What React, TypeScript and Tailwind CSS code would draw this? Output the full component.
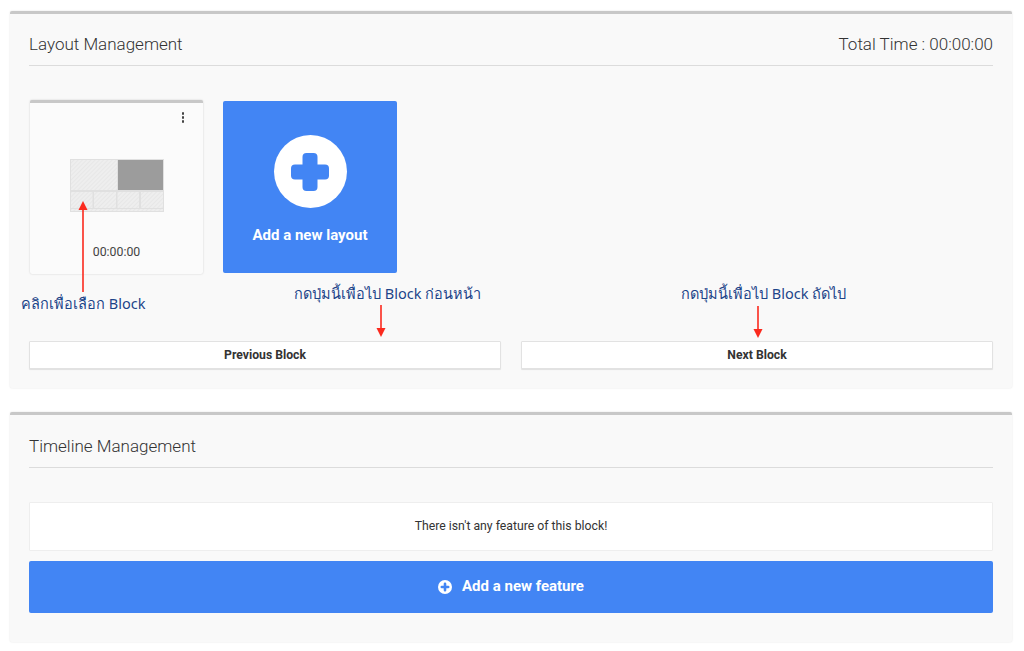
const roboto = "font-['Roboto',sans-serif]"

function Panel({ className, children }: { className: string; children: React.ReactNode }) {
  return (
    <div className={`relative ml-[10px] mr-[12px] rounded-[2px] border-t-[3px] border-[#c8c8c8] bg-[#f9f9f9] px-[19px] shadow-[0_0_2px_rgba(0,0,0,0.12)] ${className}`}>
      {children}
    </div>
  )
}

function LayoutThumb() {
  return (
    <svg width="94" height="53" viewBox="0 0 94 53" className="block">
      <defs>
        <pattern id="hatch" width="3" height="3" patternUnits="userSpaceOnUse" patternTransform="rotate(45)">
          <rect width="3" height="3" fill="#eeeeee" />
          <rect width="1" height="3" fill="#e7e7e7" />
        </pattern>
      </defs>
      <rect width="94" height="53" fill="#e0e0e0" />
      <rect x="1" y="1" width="46" height="30" fill="url(#hatch)" />
      <rect x="48" y="1" width="45" height="30" fill="#9c9c9c" />
      <rect x="1" y="33" width="21.5" height="16" fill="url(#hatch)" />
      <rect x="24" y="33" width="22" height="16" fill="url(#hatch)" />
      <rect x="47.5" y="33" width="21.5" height="16" fill="url(#hatch)" />
      <rect x="71" y="33" width="22" height="16" fill="url(#hatch)" />
      <rect x="1" y="50" width="92" height="2" fill="url(#hatch)" />
    </svg>
  )
}

function Arrow({ className, height, up }: { className: string; height: number; up?: boolean }) {
  return (
    <svg width="10" height={height} viewBox={`0 0 10 ${height}`} className={`absolute ${className}`}>
      {up ? (
        <>
          <path d={`M5 8V${height}`} stroke="#fb2a1e" strokeWidth="1.6" />
          <path d="M5 0L9.5 9H0.5Z" fill="#fb2a1e" />
        </>
      ) : (
        <>
          <path d={`M5 0V${height - 8}`} stroke="#fb2a1e" strokeWidth="1.6" />
          <path d={`M5 ${height}L0.5 ${height - 9}H9.5Z`} fill="#fb2a1e" />
        </>
      )}
    </svg>
  )
}

function Note({ className, children }: { className: string; children: React.ReactNode }) {
  return (
    <span className={`absolute whitespace-nowrap font-['Noto_Sans','Roboto',sans-serif] text-[14.5px] leading-[20px] text-[#1d4489] ${className}`}>
      {children}
    </span>
  )
}

export default function App() {
  return (
    <div className={`relative h-[651px] overflow-hidden bg-white pt-[11px] ${roboto}`}>
      <Panel className="h-[377px]">
        <div className="flex h-[52px] items-center justify-between border-b border-[#dcdcdc] pt-[10px] text-[17px] font-light text-[#333]">
          <span>Layout Management</span>
          <span>Total Time : 00:00:00</span>
        </div>

        <div className="mt-[34px] flex gap-[20px] pl-px">
          <div className="relative flex h-[174px] w-[173px] flex-col items-center rounded-[2px] border-t-[3px] border-[#c8c8c8] bg-[#fbfbfb] shadow-[0_0_2px_rgba(0,0,0,0.18)]">
            <div className="absolute right-[19px] top-[9px] flex flex-col gap-[1.5px]">
              <span className="size-[2.5px] rounded-full bg-[#444]" />
              <span className="size-[2.5px] rounded-full bg-[#444]" />
              <span className="size-[2.5px] rounded-full bg-[#444]" />
            </div>
            <div className="mt-[56px]">
              <LayoutThumb />
            </div>
            <span className="mt-[31px] text-[12.3px] leading-[18px] text-[#444]">00:00:00</span>
          </div>

          <div className="mt-px flex h-[172px] w-[174px] flex-col items-center rounded-[2px] bg-[#4285f4]">
            <div className="mt-[34px] flex size-[73px] items-center justify-center rounded-full bg-white">
              <svg width="38" height="38" viewBox="0 0 38 38">
                <rect x="11.5" y="0" width="15" height="38" rx="4" fill="#4285f4" />
                <rect x="0" y="11.5" width="38" height="15" rx="4" fill="#4285f4" />
              </svg>
            </div>
            <span className="mt-[17px] text-[15px] font-bold leading-[20px] text-white">Add a new layout</span>
          </div>
        </div>

        <div className="mt-[67px] flex gap-[20px]">
          <button className="h-[28px] flex-1 rounded-[1px] border border-[#e2e2e2] bg-white text-[12.2px] font-bold text-[#333] shadow-[0_1px_1px_rgba(0,0,0,0.1)]">
            Previous Block
          </button>
          <button className="h-[28px] flex-1 rounded-[1px] border border-[#e2e2e2] bg-white text-[12.2px] font-bold text-[#333] shadow-[0_1px_1px_rgba(0,0,0,0.1)]">
            Next Block
          </button>
        </div>
      </Panel>

      <Panel className="mt-[24px] h-[230px]">
        <div className="flex h-[53px] items-center border-b border-[#dcdcdc] pt-[12px] text-[17px] font-light text-[#333]">
          <span>Timeline Management</span>
        </div>

        <div className="mt-[34px] flex h-[49px] items-center justify-center rounded-[1px] border border-[#eee] bg-white text-[12.25px] text-[#333]">
          There isn't any feature of this block!
        </div>

        <button className="mt-[10px] flex h-[52px] w-full items-center justify-center gap-[10px] rounded-[2px] bg-[#4285f4] pb-px text-[15px] font-bold text-white">
          <svg width="14" height="14" viewBox="0 0 14 14">
            <circle cx="7" cy="7" r="7" fill="#fff" />
            <path d="M7 3.8V10.2M3.8 7H10.2" stroke="#4285f4" strokeWidth="2.6" strokeLinecap="round" />
          </svg>
          Add a new feature
        </button>
      </Panel>

      {/* annotations on top of the screenshot */}
      <Arrow className="left-[78px] top-[201px]" height="91" up />
      <Note className="left-[21px] top-[293px]">คลิกเพื่อเลือก Block</Note>
      <Note className="left-[294px] top-[283px]">กดปุ่มนี้เพื่อไป Block ก่อนหน้า</Note>
      <Arrow className="left-[376px] top-[305px]" height="32" />
      <Note className="left-[681px] top-[283px]">กดปุ่มนี้เพื่อไป Block ถัดไป</Note>
      <Arrow className="left-[753px] top-[306px]" height="32" />
    </div>
  )
}
